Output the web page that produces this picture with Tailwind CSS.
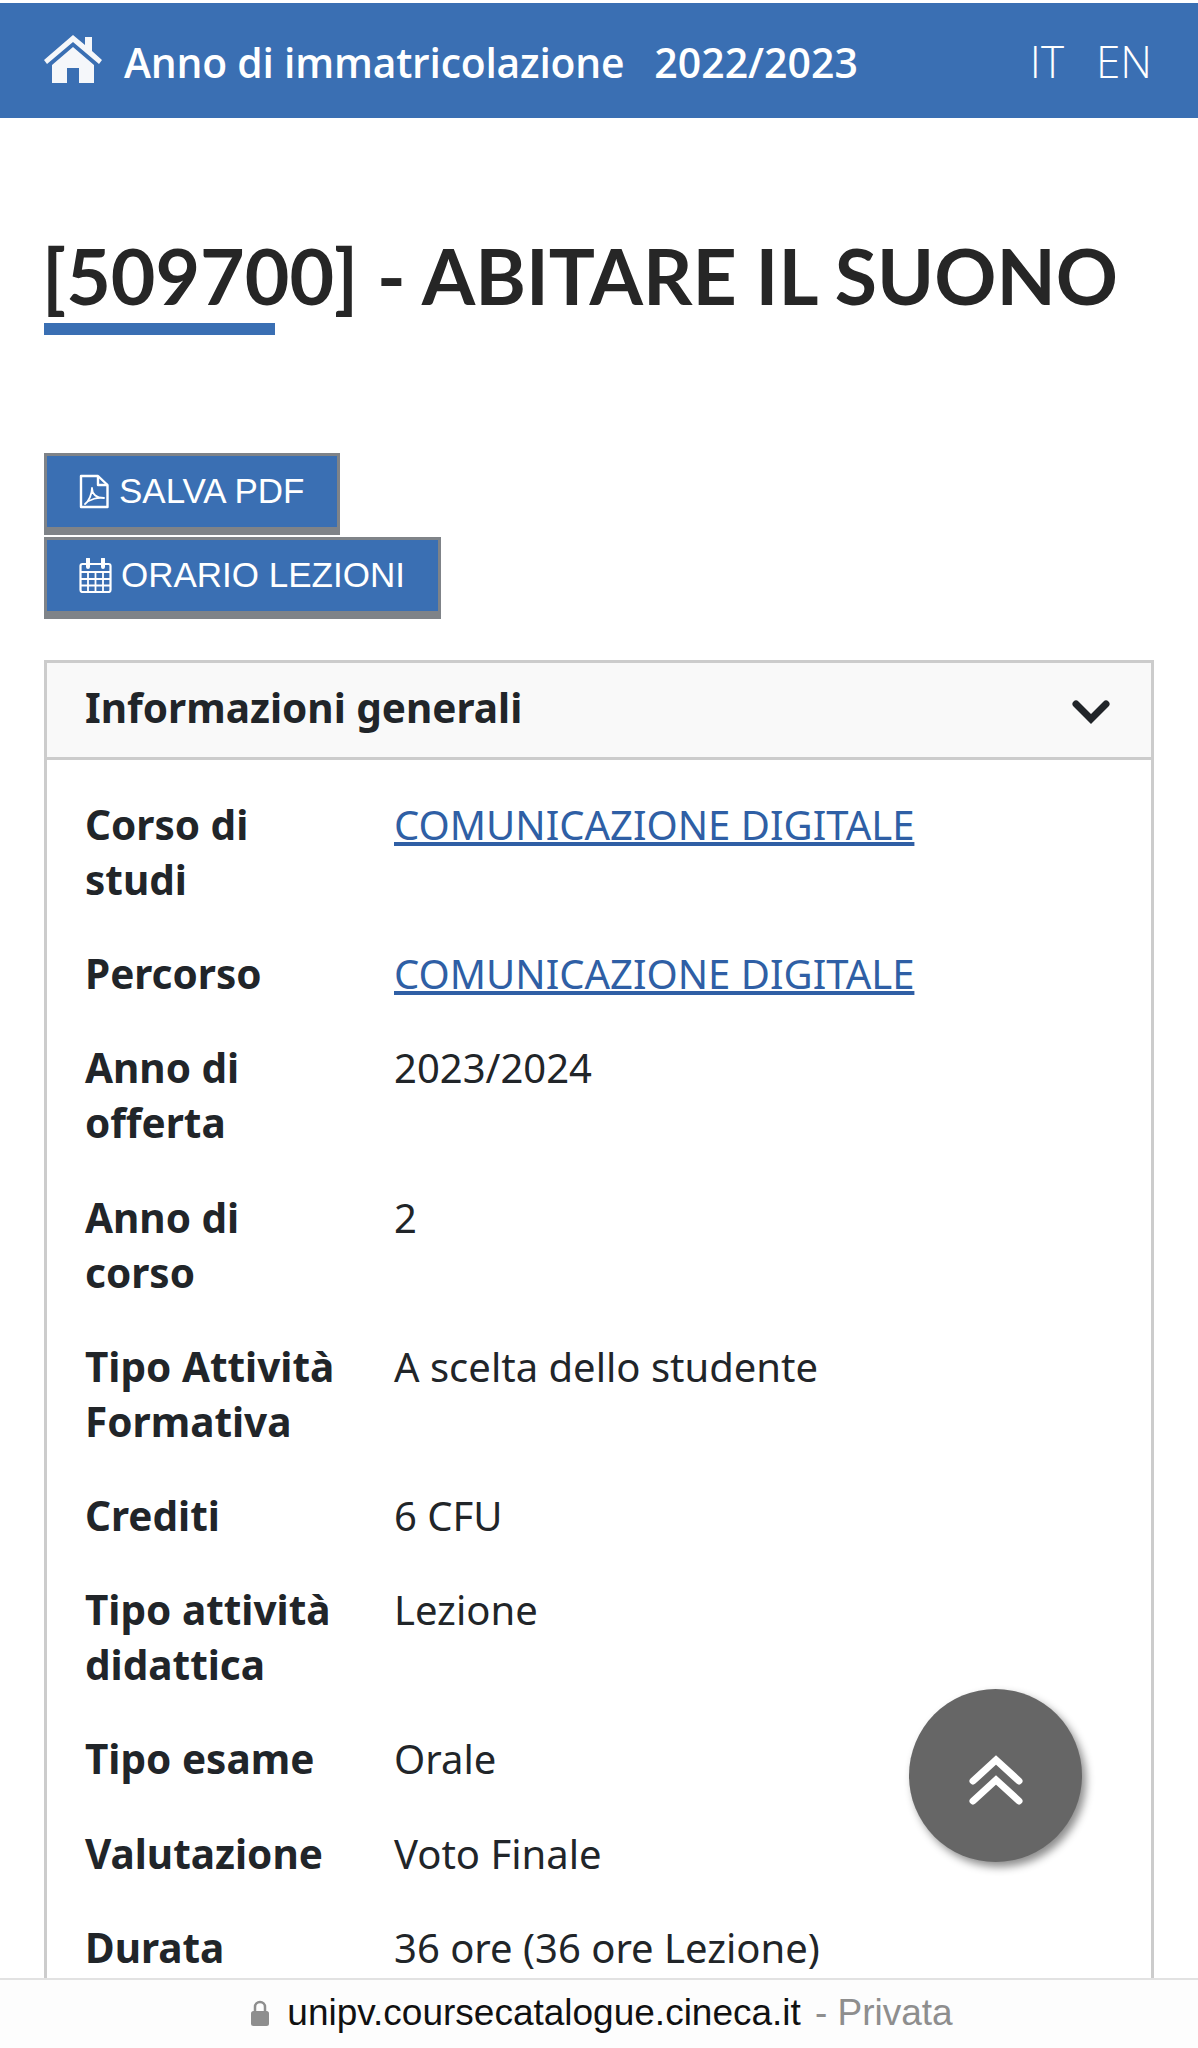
<!DOCTYPE html>
<html lang="it">
<head>
    <meta charset="UTF-8">
    <meta name="viewport" content="width=device-width, initial-scale=1.0">
    <title>ABITARE IL SUONO</title>
    <script src="https://cdn.jsdelivr.net/npm/@tailwindcss/browser@4"></script>
</head>
<body class="bg-white font-['Noto_Sans',sans-serif] text-[#212529]">
<div class="relative flex flex-col w-[1198px] h-[2048px] overflow-hidden">

    <!-- top bar -->
    <header class="mt-[3px] h-[115px] shrink-0 bg-[#3a6fb3] text-white flex items-center pl-[44px] pr-[46px]">
        <svg class="w-[58px] h-[48px] mr-[22px] -mt-[3px]" viewBox="0 0 58 48" fill="#f5f7fa">
            <path d="M29 0 L41 10 V2 H48 V16 L58 25 L55 29 L29 7 L3 29 L0 25 Z"/>
            <path d="M29 12 L50 30 V48 H35 V33 H23 V48 H8 V30 Z"/>
        </svg>
        <span class="font-['Open_Sans',sans-serif] font-semibold text-[40.800px] mt-[4px] tracking-[-0.2px]">Anno di immatricolazione</span>
        <span class="font-['Open_Sans',sans-serif] font-semibold text-[41px] mt-[4px] ml-[30px]">2022/2023</span>
        <span class="ml-auto font-['Open_Sans',sans-serif] text-[44px] font-light">IT</span>
        <span class="ml-[32px] font-['Open_Sans',sans-serif] text-[44px] font-light">EN</span>
    </header>

    <main class="flex-1 min-h-0 overflow-hidden px-[44px]">
        <h1 class="mt-[112px] -ml-[2px] font-['Lato',sans-serif] font-bold text-[77px] leading-[90px] whitespace-nowrap text-[#262626]">[509700] - ABITARE IL SUONO</h1>
        <div class="mt-[3px] w-[231px] h-[12px] bg-[#3a6fb3]"></div>

        <div class="mt-[118px] flex flex-col items-start gap-[2px]">
            <a class="flex items-center h-[82px] w-[296px] pl-[32px] bg-[#3a6fb3] border-[3px] border-b-[8px] border-[#7f8388] text-white font-['Liberation_Sans',sans-serif] text-[35px] whitespace-nowrap">
                <svg class="w-[30px] h-[35px] mr-[10px]" viewBox="0 0 30 35" fill="none" stroke="#fff" stroke-width="2.4" stroke-linejoin="round">
                    <path d="M2 2 H19 L28.500 11 V33 H2 Z"/>
                    <path d="M19 2 V11 H28.500"/>
                    <path stroke-width="1.800" d="M6 30 C10 27 13 20 13 14 C13 20 17 24 25 24 C19 23 11 25 6 30 Z"/>
                </svg>
                SALVA PDF
            </a>
            <a class="flex items-center h-[82px] w-[397px] pl-[32px] bg-[#3a6fb3] border-[3px] border-b-[8px] border-[#7f8388] text-white font-['Liberation_Sans',sans-serif] text-[35px] whitespace-nowrap">
                <svg class="w-[33px] h-[35px] mr-[9px]" viewBox="0 0 33 35" fill="none" stroke="#fff" stroke-width="2.200">
                    <rect x="1.500" y="6" width="30" height="28" rx="2"/>
                    <path d="M1.500 14 H31.500 M1.500 21 H31.500 M1.500 27.500 H31.500 M9 14 V34 M16.500 14 V34 M24 14 V34" stroke-width="1.800"/>
                    <path d="M9 1 V9 M24 1 V9" stroke-width="4" stroke-linecap="round"/>
                </svg>
                ORARIO LEZIONI
            </a>
        </div>

        <!-- panel, runs off under the browser bar -->
        <section class="mt-[41px] w-[1110px] border-[3px] border-b-0 border-[#cccccc] h-[1400px]">
            <div class="h-[97px] bg-[#f9f9f9] border-b-[3px] border-[#cccccc] flex items-center justify-between pl-[38px] pr-[41px]">
                <h2 class="font-bold text-[40.500px] leading-none -mt-[3px]">Informazioni generali</h2>
                <svg class="w-[38px] h-[26px] mt-[4px]" viewBox="0 0 38 26" fill="none" stroke="#212529" stroke-width="7" stroke-linejoin="miter" stroke-linecap="round"><path d="M4 5 L19 20 L34 5"/></svg>
            </div>
            <dl class="grid grid-cols-[309px_1fr] gap-y-[39.200px] pl-[38px] pt-[37px] text-[40px] leading-[55px]">
                <dt class="font-bold text-[40.500px] w-[262px]">Corso di studi</dt>
                <dd><a class="text-[#2f5fa5] underline">COMUNICAZIONE DIGITALE</a></dd>
                <dt class="font-bold text-[40.500px] w-[262px]">Percorso</dt>
                <dd><a class="text-[#2f5fa5] underline">COMUNICAZIONE DIGITALE</a></dd>
                <dt class="font-bold text-[40.500px] w-[262px]">Anno di offerta</dt>
                <dd>2023/2024</dd>
                <dt class="font-bold text-[40.500px] w-[262px]">Anno di corso</dt>
                <dd>2</dd>
                <dt class="font-bold text-[40.500px] w-[262px]">Tipo Attività Formativa</dt>
                <dd>A scelta dello studente</dd>
                <dt class="font-bold text-[40.500px] w-[262px]">Crediti</dt>
                <dd>6 CFU</dd>
                <dt class="font-bold text-[40.500px] w-[262px]">Tipo attività didattica</dt>
                <dd>Lezione</dd>
                <dt class="font-bold text-[40.500px] w-[262px]">Tipo esame</dt>
                <dd>Orale</dd>
                <dt class="font-bold text-[40.500px] w-[262px]">Valutazione</dt>
                <dd>Voto Finale</dd>
                <dt class="font-bold text-[40.500px] w-[262px]">Durata</dt>
                <dd>36 ore (36 ore Lezione)</dd>
            </dl>
        </section>
    </main>

    <!-- browser address bar -->
    <footer class="h-[70px] shrink-0 bg-[#fdfdfd] border-t-[2px] border-[#e2e2e2] flex items-center justify-center pl-[5px] pb-[2px] font-['Liberation_Sans',sans-serif] text-[37px]">
        <svg class="w-[20px] h-[26px] mr-[17px]" viewBox="0 0 20 26">
            <path d="M5 12 V7 a5 5 0 0 1 10 0 V12" fill="none" stroke="#8e8e8e" stroke-width="2.500"/>
            <rect x="1" y="11" width="18" height="15" rx="2.500" fill="#8e8e8e"/>
        </svg>
        <span class="text-[#111]">unipv.coursecatalogue.cineca.it</span>
        <span class="ml-[14px] text-[#8e8e8e]">- Privata</span>
    </footer>

    <!-- scroll to top -->
    <button class="absolute left-[909px] top-[1689px] w-[173px] h-[173px] rounded-full bg-[#666666] shadow-[4px_5px_9px_rgba(0,0,0,0.45)] flex items-center justify-center">
        <svg class="w-[54px] h-[52px] mt-[10px]" viewBox="0 0 54 52" fill="none" stroke="#fff" stroke-width="7" stroke-linecap="round" stroke-linejoin="miter"><path d="M4 26 L27 5 L50 26"/><path d="M4 46 L27 25 L50 46"/></svg>
    </button>
</div>
</body>
</html>
